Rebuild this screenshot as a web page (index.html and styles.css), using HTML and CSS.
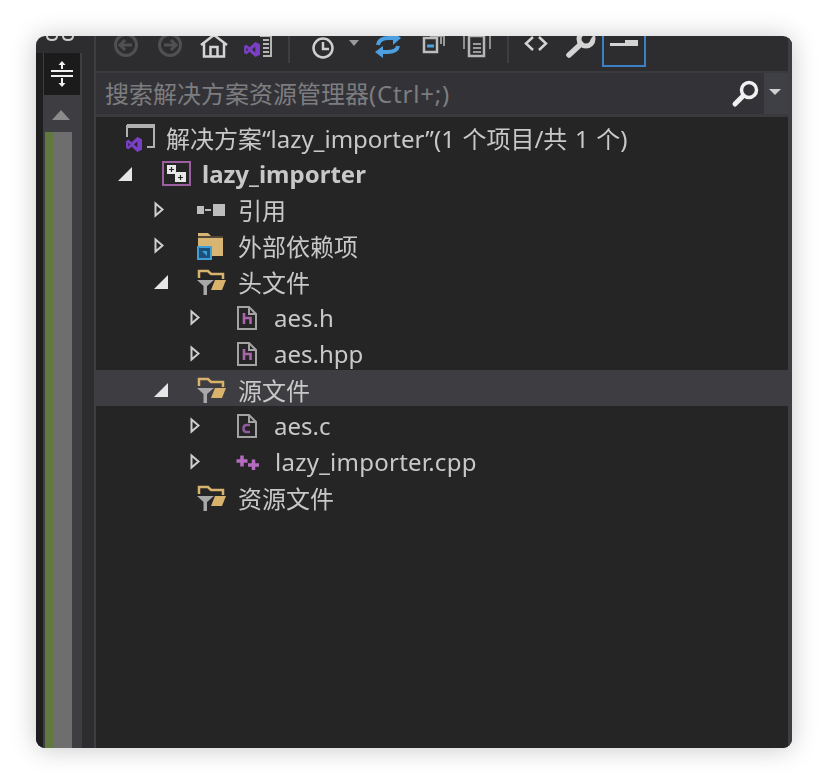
FILE: index.html
```html
<!DOCTYPE html>
<html lang="zh-CN">
<head>
    <meta charset="UTF-8">
    <meta name="viewport" content="width=device-width, initial-scale=1.0">
    <title>解决方案资源管理器</title>
    <link rel="stylesheet" href="styles.css">
</head>
<body>
    <svg class="defs" width="0" height="0">
        <symbol id="open" viewBox="0 0 16 18">
            <path d="M2.500 2.500 L9.500 8.500 L2.500 14.500 Z" fill="none" stroke="#cfcfcf" stroke-width="2"/>
        </symbol>
        <symbol id="down" viewBox="0 0 16 18">
            <path d="M15 2 V16 H1 Z" fill="#e6e6e6"/>
        </symbol>
        <symbol id="vs" viewBox="0 0 18 16">
            <path d="M12 0 L17 2.500 V13.500 L12 16 L6 10.500 L2.500 13 L0 11.800 V4.200 L2.500 3 L6 5.500 Z M12 4.800 L8.500 8 L12 11.200 Z M2.500 6 V10 L4.500 8 Z" fill="#7a3fc4" fill-rule="evenodd"/>
        </symbol>
        <symbol id="filter-folder" viewBox="0 0 30 26">
            <path d="M2 9 V2 H11 L14 5 H26 V10" fill="none" stroke="#d9b26c" stroke-width="2.500"/>
            <path d="M14 21 H25 L29 11 H18 Z" fill="#d9b26c"/>
            <path d="M0 11 H17 L10 17 V26 H6.500 V17 Z" fill="#a8a8a8"/>
        </symbol>
        <symbol id="header" viewBox="0 0 20 24">
            <path d="M1 1 H12 L19 8 V23 H1 Z" fill="#252526" stroke="#a3a3a3" stroke-width="2"/>
            <path d="M12 1 V8 H19" fill="none" stroke="#a3a3a3" stroke-width="2"/>
            <path d="M7 7 V18 M7 12 H13.500 V18" fill="none" stroke="#a866a8" stroke-width="2.600"/>
        </symbol>
        <symbol id="source" viewBox="0 0 20 24">
            <path d="M1 1 H12 L19 8 V23 H1 Z" fill="#252526" stroke="#a3a3a3" stroke-width="2"/>
            <path d="M12 1 V8 H19" fill="none" stroke="#a3a3a3" stroke-width="2"/>
            <path d="M13 11 H9.500 Q6.500 11 6.500 14.500 Q6.500 18 9.500 18 H13" fill="none" stroke="#8e5a9e" stroke-width="2.600"/>
        </symbol>
    </svg>

    <div class="window">
        <div class="rail">
            <div class="rail-top">
                <svg width="30" height="6" viewBox="0 0 30 6"><path d="M2 0 Q2 4 7 4 Q12 4 12 0 M18 0 Q18 4 23 4 Q28 4 28 0" fill="none" stroke="#cfcfcf" stroke-width="2"/></svg>
            </div>
            <div class="rail-btn">
                <svg width="24" height="28" viewBox="0 0 24 28">
                    <path d="M1 11 H23 M1 16 H23" stroke="#f0f0f0" stroke-width="2"/>
                    <path d="M12 2 V9 M12 18 V26" stroke="#f0f0f0" stroke-width="2"/>
                    <path d="M8.500 5 L12 1 L15.500 5 Z M8.500 23 L12 27 L15.500 23 Z" fill="#f0f0f0"/>
                </svg>
            </div>
            <div class="scroll">
                <div class="scroll-edge"></div>
                <div class="scroll-track">
                    <div class="arrow-up"></div>
                    <div class="thumb"></div>
                </div>
            </div>
        </div>
        <div class="gutter"></div>

        <div class="main">
            <div class="toolbar">
                <svg class="tool" width="44" height="34" viewBox="0 0 44 34"><circle cx="22" cy="9" r="10.500" fill="none" stroke="#505052" stroke-width="3"/><path d="M28 9 H17 M21 4 L16 9 L21 14" fill="none" stroke="#505052" stroke-width="3"/></svg>
                <svg class="tool" width="44" height="34" viewBox="0 0 44 34"><circle cx="22" cy="9" r="10.500" fill="none" stroke="#505052" stroke-width="3"/><path d="M16 9 H27 M23 4 L28 9 L23 14" fill="none" stroke="#505052" stroke-width="3"/></svg>
                <svg class="tool" width="44" height="34" viewBox="0 0 44 34"><path d="M9 9 L22 -1 L35 9 M12 7 V20.500 H32 V7 M18.500 20 V11 H25.500 V20" fill="none" stroke="#d4d4d4" stroke-width="2.500"/></svg>
                <svg class="tool" width="38" height="34" viewBox="0 0 38 34">
                    <path d="M24 0 H35 V20 H27" fill="none" stroke="#b5b5b5" stroke-width="2"/>
                    <path d="M27 4 H33 M27 8 H33 M27 12 H33 M27 16 H33" stroke="#b5b5b5" stroke-width="2"/>
                    <use href="#vs" x="8" y="6" width="17" height="15"/>
                </svg>
                <div class="tool-sep"></div>
                <svg class="tool clock" width="30" height="34" viewBox="0 0 30 34"><circle cx="15" cy="12" r="9.500" fill="none" stroke="#cfcfcf" stroke-width="2.500"/><path d="M15 6 V13 H21" fill="none" stroke="#cfcfcf" stroke-width="2.500"/></svg>
                <svg class="tool caret" width="12" height="34" viewBox="0 0 12 34"><path d="M1 4 H11 L6 10 Z" fill="#9a9a9a"/></svg>
                <svg class="tool sync" width="30" height="34" viewBox="0 0 30 34">
                    <path d="M5 9 Q6 2 16 2 H22" fill="none" stroke="#4d9fe0" stroke-width="4"/>
                    <path d="M20 -4 L28 2 L20 9 Z" fill="#4d9fe0"/>
                    <path d="M25 10 Q24 16 14 16 H8" fill="none" stroke="#4d9fe0" stroke-width="4"/>
                    <path d="M10 10 L2 16 L10 22 Z" fill="#4d9fe0"/>
                </svg>
                <svg class="tool copy" width="24" height="34" viewBox="0 0 24 34">
                    <path d="M8 0 H22 V10 M19 0 V8" fill="none" stroke="#9a9a9a" stroke-width="2"/>
                    <rect x="2" y="2" width="13" height="14" fill="none" stroke="#bdbdbd" stroke-width="2.500"/>
                    <path d="M5 10 H12" stroke="#4d9fe0" stroke-width="3"/>
                </svg>
                <svg class="tool pages" width="30" height="34" viewBox="0 0 30 34">
                    <path d="M2 0 V13 M28 0 V13" stroke="#8d8d8d" stroke-width="2"/>
                    <path d="M7 0 H22 V20 H7 Z" fill="none" stroke="#b5b5b5" stroke-width="2.500"/>
                    <path d="M11 8 H19 M11 12 H19 M11 16 H19" stroke="#9a9a9a" stroke-width="2"/>
                </svg>
                <div class="tool-sep sep2"></div>
                <svg class="tool code" width="24" height="34" viewBox="0 0 24 34"><path d="M9 1 L2 7.500 L9 14 M15 1 L22 7.500 L15 14" fill="none" stroke="#d4d4d4" stroke-width="2.500"/></svg>
                <svg class="tool wrench" width="30" height="34" viewBox="0 0 30 34"><path d="M3 19 L15 8" stroke="#d4d4d4" stroke-width="5.500" stroke-linecap="round"/><circle cx="20" cy="3" r="7" fill="none" stroke="#d4d4d4" stroke-width="5"/><path d="M21 -4 L30 -4 L24 4 Z" fill="#2d2d30"/></svg>
                <div class="pin"><span class="pin-head"></span><span class="pin-bar"></span></div>
            </div>

            <div class="search">
                <div class="search-text">搜索解决方案资源管理器<span class="keys">(Ctrl+;)</span></div>
                <svg class="search-icon" width="30" height="30" viewBox="0 0 30 30"><circle cx="18" cy="11" r="7.500" fill="none" stroke="#f0f0f0" stroke-width="3.500"/><path d="M12 17 L4 25" stroke="#f0f0f0" stroke-width="5" stroke-linecap="round"/></svg>
                <div class="search-drop"><span class="drop-arrow"></span></div>
            </div>

            <div class="tree">
                <div class="row root">
                    <svg class="icon" width="30" height="28" viewBox="0 0 30 28">
                        <path d="M1 3 H28 M1 1 H28 V23 H21 M1 1 V13" fill="none" stroke="#b0b0b0" stroke-width="2"/>
                        <use href="#vs" x="0" y="13" width="17" height="15"/>
                    </svg>
                    <span class="label">解决方案“lazy_importer”(1 个项目/共 1 个)</span>
                </div>
                <div class="row lvl1">
                    <svg class="exp" width="16" height="18"><use href="#down"/></svg>
                    <svg class="icon" width="30" height="26" viewBox="0 0 30 26">
                        <rect x="1" y="1" width="27" height="23" fill="none" stroke="#9a5f9e" stroke-width="2"/>
                        <path d="M5 4 H14 V11 H24 V21 H13 V13 H5 Z" fill="#e8e8e8"/>
                        <path d="M9.500 6 V11 M7 8.500 H12 M18.500 14 V19 M16 16.500 H21" stroke="#252526" stroke-width="1.200"/>
                    </svg>
                    <span class="label bold">lazy_importer</span>
                </div>
                <div class="row lvl2">
                    <svg class="exp" width="16" height="18"><use href="#open"/></svg>
                    <svg class="icon" width="30" height="16" viewBox="0 0 30 16">
                        <rect x="0" y="4" width="7" height="8" fill="#bdbdbd"/>
                        <path d="M8 8 H14" stroke="#bdbdbd" stroke-width="2"/>
                        <rect x="16" y="2" width="12" height="12" fill="#bdbdbd"/>
                    </svg>
                    <span class="label">引用</span>
                </div>
                <div class="row lvl2">
                    <svg class="exp" width="16" height="18"><use href="#open"/></svg>
                    <svg class="icon" width="30" height="28" viewBox="0 0 30 28">
                        <path d="M1 4 V1 H11 L14 4 H26 V24 H1 Z" fill="#d9b574"/>
                        <path d="M1 5 H26" stroke="#252526" stroke-width="1.500"/>
                        <rect x="1" y="15" width="13" height="12" fill="#1d4f78" stroke="#3f9fd8" stroke-width="2"/>
                        <path d="M5 19 H10 V24 Z" fill="#3f9fd8"/>
                    </svg>
                    <span class="label">外部依赖项</span>
                </div>
                <div class="row lvl2">
                    <svg class="exp" width="16" height="18"><use href="#down"/></svg>
                    <svg class="icon" width="30" height="26"><use href="#filter-folder"/></svg>
                    <span class="label">头文件</span>
                </div>
                <div class="row lvl3">
                    <svg class="exp" width="16" height="18"><use href="#open"/></svg>
                    <svg class="icon" width="20" height="24"><use href="#header"/></svg>
                    <span class="label">aes.h</span>
                </div>
                <div class="row lvl3">
                    <svg class="exp" width="16" height="18"><use href="#open"/></svg>
                    <svg class="icon" width="20" height="24"><use href="#header"/></svg>
                    <span class="label">aes.hpp</span>
                </div>
                <div class="row lvl2 selected">
                    <svg class="exp" width="16" height="18"><use href="#down"/></svg>
                    <svg class="icon" width="30" height="26"><use href="#filter-folder"/></svg>
                    <span class="label">源文件</span>
                </div>
                <div class="row lvl3">
                    <svg class="exp" width="16" height="18"><use href="#open"/></svg>
                    <svg class="icon" width="20" height="24"><use href="#source"/></svg>
                    <span class="label">aes.c</span>
                </div>
                <div class="row lvl3">
                    <svg class="exp" width="16" height="18"><use href="#open"/></svg>
                    <svg class="icon plus" width="26" height="16" viewBox="0 0 26 16">
                        <path d="M6 1.500 V12.500 M0.500 7 H11.500 M17.500 5.500 V16 M12 11 H23" stroke="#b56cc0" stroke-width="3.500"/>
                    </svg>
                    <span class="label wide">lazy_importer.cpp</span>
                </div>
                <div class="row lvl2">
                    <span class="exp-empty"></span>
                    <svg class="icon" width="30" height="26"><use href="#filter-folder"/></svg>
                    <span class="label">资源文件</span>
                </div>
            </div>
        </div>
    </div>
</body>
</html>
```

FILE: styles.css
```css
body {
    margin: 0;
    padding: 36px;
    background-color: #fff;
    font-family: "Noto Sans", "Noto Sans CJK SC", sans-serif;
}
.defs {
    position: absolute;
}
.window {
    display: flex;
    width: 756px;
    height: 712px;
    border-radius: 9px;
    overflow: hidden;
    background-color: #2d2d30;
    box-shadow: 0 1px 26px rgba(0,0,0,0.22);
    filter: blur(0.45px);
}

/* left strip */
.rail {
    width: 46px;
    display: flex;
    flex-direction: column;
}
.rail-top {
    height: 17px;
    display: flex;
    justify-content: center;
    align-items: flex-start;
    padding-left: 2px;
}
.rail-btn {
    height: 42px;
    margin-left: 8px;
    margin-right: 2px;
    display: flex;
    justify-content: center;
    align-items: center;
    background-color: #1b1b1c;
    position: relative;
    z-index: 1;
}
.scroll {
    flex: 1;
    display: flex;
    margin-top: -42px;
}
.scroll-edge {
    width: 7px;
    background-color: #1e1e1e;
    border-right: 2px solid #3e3e42;
}
.scroll-track {
    flex: 1;
    padding-top: 42px;
    display: flex;
    flex-direction: column;
    background-color: #3e3e42;
}
.arrow-up {
    width: 0;
    height: 0;
    margin: 15px 0 12px 7px;
    border-left: 9px solid transparent;
    border-right: 9px solid transparent;
    border-bottom: 10px solid #8b8b8b;
}
.thumb {
    flex: 1;
    width: 19px;
    background-color: #6e6e6e;
    border-left: 8px solid #5f7a3c;
}
.gutter {
    width: 12px;
    background-color: #2d2d30;
}

/* right pane */
.main {
    flex: 1;
    display: flex;
    flex-direction: column;
    border-left: 2px solid #3e3e42;
    border-right: 4px solid #3e3e42;
}
.toolbar {
    height: 34px;
    display: flex;
    align-items: flex-start;
    padding-left: 8px;
    overflow: hidden;
    flex-shrink: 0;
}
.tool {
    flex-shrink: 0;
}
.tool-sep {
    width: 2px;
    height: 27px;
    margin-left: 14px;
    background-color: #3e3e42;
}
.sep2 {
    margin-left: 15px;
}
.clock {
    margin-left: 18px;
}
.caret {
    margin-left: 10px;
}
.sync {
    margin-left: 13px;
}
.copy {
    margin-left: 19px;
}
.pages {
    margin-left: 16px;
}
.code {
    margin-left: 15px;
}
.wrench {
    margin-left: 18px;
}
.pin {
    width: 40px;
    height: 29px;
    margin-left: 6px;
    margin-top: -2px;
    border: 2px solid #3d7fc4;
    position: relative;
}
.pin-head {
    position: absolute;
    right: 6px;
    top: 4px;
    width: 13px;
    height: 3px;
    background-color: #d4d4d4;
}
.pin-bar {
    position: absolute;
    left: 6px;
    right: 6px;
    top: 7px;
    height: 3px;
    background-color: #d4d4d4;
}
.search {
    height: 41px;
    margin-top: 1px;
    border-top: 2px solid #3a3a3d;
    border-bottom: 3px solid #3a3a3d;
    display: flex;
    align-items: center;
    background-color: #333337;
    flex-shrink: 0;
}
.search-text {
    flex: 1;
    padding-left: 9px;
    padding-bottom: 2px;
    font-size: 24px;
    color: #7d7d80;
    white-space: nowrap;
}
.keys {
    letter-spacing: 0.8px;
}
.search-icon {
    margin-right: 3px;
}
.search-drop {
    width: 24px;
    align-self: stretch;
    display: flex;
    justify-content: center;
    align-items: center;
    background-color: #3f3f46;
}
.drop-arrow {
    width: 0;
    height: 0;
    margin: 0 2px 4px 0;
    border-left: 6px solid transparent;
    border-right: 6px solid transparent;
    border-top: 6px solid #d0d0d0;
}

/* tree */
.tree {
    flex: 1;
    padding-top: 1px;
    background-color: #252526;
}
.row {
    height: 36px;
    display: flex;
    align-items: center;
    font-size: 24px;
    color: #c8c8c8;
    white-space: nowrap;
}
.label {
    padding-top: 2px;
}
.wide {
    letter-spacing: 0.25px;
}
.root {
    padding-left: 30px;
    word-spacing: 1.3px;
}
.lvl1 {
    padding-left: 21px;
}
.lvl2 {
    padding-left: 57px;
}
.lvl3 {
    padding-left: 93px;
}
.selected {
    background-color: #3e3e42;
}
.exp, .exp-empty {
    width: 16px;
    height: 18px;
    margin-top: 4px;
    margin-right: 29px;
    flex-shrink: 0;
}
.icon {
    margin-top: 4px;
    margin-right: 10px;
    flex-shrink: 0;
}
.lvl2 .icon {
    margin-left: -1px;
    margin-right: 11px;
}
.lvl3 .icon {
    margin-right: 17px;
    margin-left: 3px;
}
.lvl3 .plus {
    margin-left: 2px;
    margin-right: 13px;
}
.bold {
    font-weight: 700;
}
```
